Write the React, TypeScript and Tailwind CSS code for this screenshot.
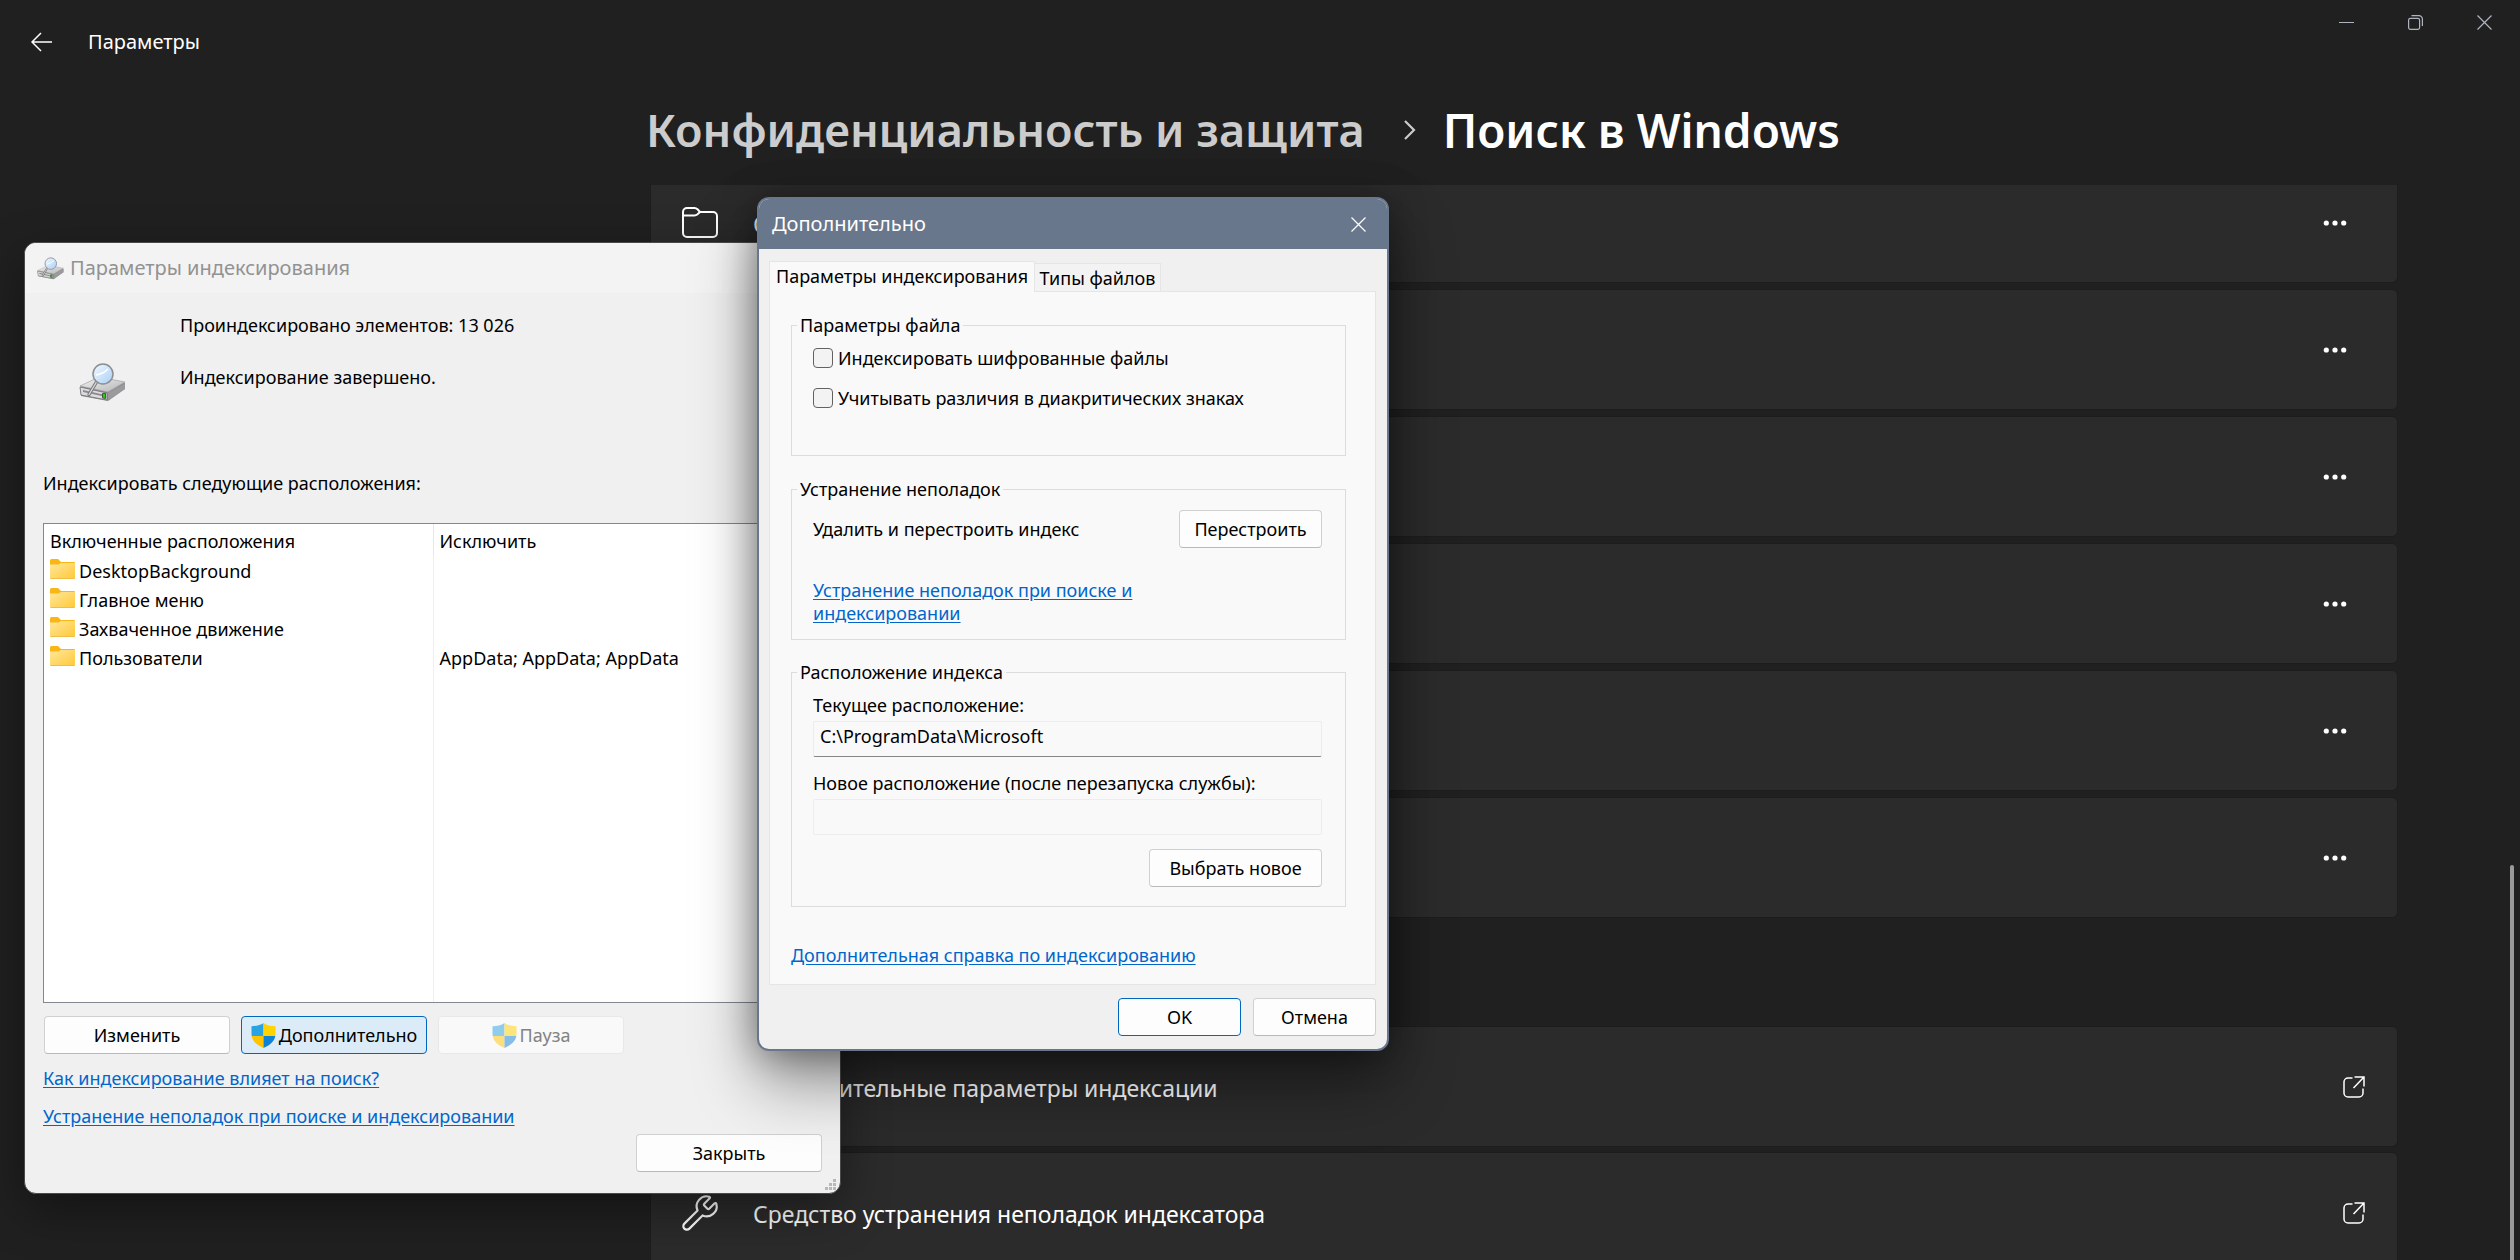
import React from "react";
import { Wrench } from "lucide-react";

const locations = [
  { name: "DesktopBackground", exclude: "" },
  { name: "Главное меню", exclude: "" },
  { name: "Захваченное движение", exclude: "" },
  { name: "Пользователи", exclude: "AppData; AppData; AppData" },
];

const folderRows = ["C", "", "", "", "", ""];

const button =
  "flex h-[38px] items-center justify-center rounded-[4px] border border-[#d0d0d0] border-b-[#b9b9b9] bg-[#fdfdfd]";
const link = "text-[#0066cc] underline underline-offset-2";

function BackArrow() {
  return (
    <svg width="22" height="20" viewBox="0 0 22 20" fill="none" stroke="currentColor" strokeWidth="1.5">
      <path d="M21 10H1.5M10 1 1 10l9 9" />
    </svg>
  );
}

function CloseIcon() {
  return (
    <svg width="15" height="15" viewBox="0 0 15 15" fill="none" stroke="currentColor" strokeWidth="1.2">
      <path d="M.5.5l14 14M14.5.5l-14 14" />
    </svg>
  );
}

function FolderOutline() {
  return (
    <svg width="36" height="31" viewBox="0 0 36 31" fill="none" stroke="currentColor" strokeWidth="2">
      <path d="M1 7V5a4 4 0 0 1 4-4h7.500c1.200 0 2.200.5 3 1.300L18 5h13a4 4 0 0 1 4 4v17a4 4 0 0 1-4 4H5a4 4 0 0 1-4-4Z" />
      <path d="M1 8.500h11.500c1.200 0 2.200-.5 3-1.200L18 5" />
    </svg>
  );
}

function OpenExternal() {
  return (
    <svg width="22" height="22" viewBox="0 0 22 22" fill="none" stroke="currentColor" strokeWidth="1.500">
      <path d="M9.500 2H5a4 4 0 0 0-4 4v11a4 4 0 0 0 4 4h11a4 4 0 0 0 4-4v-4.500" />
      <path d="M11.500 1H21v9.500M21 1 10.500 12" />
    </svg>
  );
}

function Dots() {
  return (
    <svg width="24" height="6" viewBox="0 0 24 6" fill="currentColor">
      <circle cx="3.300" cy="3" r="2.600" />
      <circle cx="12" cy="3" r="2.600" />
      <circle cx="20.700" cy="3" r="2.600" />
    </svg>
  );
}

function YellowFolder() {
  return (
    <svg width="25" height="24" viewBox="0 0 25 24" className="shrink-0">
      <defs>
        <linearGradient id="folder" x1="0" y1="0" x2="1" y2="1">
          <stop offset="0" stopColor="#ffe79c" />
          <stop offset="1" stopColor="#ffc937" />
        </linearGradient>
      </defs>
      <path d="M0 1.500Q0 0 1.500 0H8l3 3h13q1 0 1 1v6H0z" fill="#f9b715" />
      <path d="M0 5.500h8.500L11 4h14v14.500q0 1.500-1.500 1.500h-22Q0 20 0 18.500z" fill="url(#folder)" />
      <path d="M.5 19.500h24" stroke="#f0bd4a" />
    </svg>
  );
}

// Drive with a magnifier standing on it
function IndexIcon({ className }: { className: string }) {
  return (
    <svg viewBox="0 0 47 39" className={className}>
      <defs>
        <linearGradient id="drive" x1="0" y1="0" x2="1" y2="1">
          <stop offset="0" stopColor="#f4f4f4" />
          <stop offset="1" stopColor="#b4b4b6" />
        </linearGradient>
        <linearGradient id="lens" x1="0" y1="0" x2="1" y2="1">
          <stop offset="0" stopColor="#f3f9ff" />
          <stop offset="1" stopColor="#a9cff5" />
        </linearGradient>
      </defs>
      <path d="M1 24 20 15l26 5v6L29 38 2 33z" fill="#8c8c8e" />
      <path d="M1 23 20 14l26 5-17 10z" fill="url(#drive)" stroke="#a2a2a4" strokeWidth=".7" />
      <path d="M1 24 28 30v7L2 32z" fill="#dcdcde" stroke="#707073" strokeWidth=".8" />
      <path d="M29 30 46 20.500V26L29 37z" fill="#9b9b9e" />
      <path d="M4 27l20 4.500v1.800L4 29z" fill="#8a8a8d" />
      <path d="M23.500 30.500h3v5l-3-.5z" fill="#35c41b" stroke="#1e3a18" strokeWidth=".7" />
      <path d="M17.500 19 10 31.500" stroke="#77777a" strokeWidth="3.400" strokeLinecap="round" />
      <path d="M17.500 19 10 31.500" stroke="#d8d8da" strokeWidth="1.400" strokeLinecap="round" />
      <circle cx="24" cy="11" r="10" fill="url(#lens)" stroke="#8b8e93" strokeWidth="1.500" />
      <path d="M17 12q7-1 12-6" fill="none" stroke="#fff" strokeWidth="1.500" />
    </svg>
  );
}

function Shield() {
  return (
    <svg width="25" height="25" viewBox="0 0 25 25">
      <clipPath id="shield">
        <path d="M12.500 0c3 2.200 7.500 3.200 12 3.200V11c0 6.500-5 11-12 14C5.500 22 .5 17.500.5 11V3.200C5 3.200 9.500 2.200 12.500 0z" />
      </clipPath>
      <g clipPath="url(#shield)">
        <path d="M0 0h12.500v13H0z" fill="#2aa3e3" />
        <path d="M12.500 0H25v13H12.500z" fill="#ffd400" />
        <path d="M0 13h12.500v12H0z" fill="#ffc400" />
        <path d="M12.500 13H25v12H12.500z" fill="#0f82d8" />
      </g>
    </svg>
  );
}

function Card({ icon, text, children }: { icon?: React.ReactNode; text: string; children: React.ReactNode }) {
  return (
    <li className="flex h-[121px] shrink-0 items-center rounded-md border border-[#1d1d1d] bg-[#2b2b2b] pr-8 pl-[31px]">
      <span className="mr-[35px] w-9">{icon}</span>
      <span className="flex-1 pt-0.5 text-[23px]">{text}</span>
      {children}
    </li>
  );
}

function SettingsPage() {
  return (
    <main className="flex h-screen flex-col overflow-hidden bg-[#202020] text-white">
      <header className="flex h-[84px] shrink-0 justify-between">
        <div className="flex items-center pl-[31px]">
          <button aria-label="Назад" className="mr-[35px]">
            <BackArrow />
          </button>
          <span className="text-[20px]">Параметры</span>
        </div>
        <div className="flex h-11 pr-px text-[#aeb4c0]">
          <button aria-label="Свернуть" className="flex w-[69px] items-center justify-center">
            <span className="h-px w-[15px] bg-current" />
          </button>
          <button aria-label="Восстановить" className="flex w-[69px] items-center justify-center">
            <svg width="15" height="15" viewBox="0 0 15 15" fill="none" stroke="currentColor" strokeWidth="1.200">
              <rect x=".6" y="3.400" width="11" height="11" rx="1.800" />
              <path d="M3.500.6h7.400a3.500 3.500 0 0 1 3.500 3.500v7" />
            </svg>
          </button>
          <button aria-label="Закрыть окно" className="flex w-[69px] items-center justify-center">
            <CloseIcon />
          </button>
        </div>
      </header>
      <h1 className="mt-4 flex h-[60px] shrink-0 items-center pl-[646px] font-semibold">
        <a href="#privacy" className="text-[45px] text-[#cccccc]">Конфиденциальность и защита</a>
        <svg width="13" height="20" viewBox="0 0 13 20" className="mr-[27px] ml-[38px]" fill="none" stroke="#cccccc" strokeWidth="2.200">
          <path d="m2 1 9 9-9 9" />
        </svg>
        <span className="text-[46px]">Поиск в Windows</span>
      </h1>
      <div className="mt-[25px] flex min-h-0 flex-1 overflow-hidden">
        <div className="-mt-[23px] flex flex-1 flex-col pl-[650px]">
          <ul className="flex flex-col gap-[6px]">
            {folderRows.map((text, i) => (
              <Card key={i} icon={<FolderOutline />} text={text}>
                <button aria-label="Дополнительные действия" className="flex h-12 w-[60px] items-center justify-center">
                  <Dots />
                </button>
              </Card>
            ))}
          </ul>
          <ul className="mt-[108px] flex flex-col gap-[5px]">
            <Card text="Дополнительные параметры индексации">
              <a href="#advanced" aria-label="Открыть"><OpenExternal /></a>
            </Card>
            <Card icon={<Wrench size={40} strokeWidth={1.3} className="-ml-0.5" />} text="Средство устранения неполадок индексатора">
              <a href="#troubleshoot" aria-label="Открыть"><OpenExternal /></a>
            </Card>
          </ul>
        </div>
        <div className="flex w-[122px] flex-col items-end justify-end pr-[6px]">
          <div className="h-[395px] w-1 rounded-t-full bg-[#9a9a9a]" />
        </div>
      </div>
    </main>
  );
}

function IndexingWindow() {
  return (
    <section className="absolute top-[242px] left-[24px] w-[817px] overflow-hidden rounded-xl border border-[#4a4a4a] bg-[#f0f0f0] shadow-[0_16px_48px_rgba(0,0,0,0.4)]">
      <header className="flex h-[50px] items-center bg-[#f3f3f3] pl-3 text-[20px] text-[#929292]">
        <IndexIcon className="mr-[6px] h-[23px] w-[27px]" />
        <h2>Параметры индексирования</h2>
      </header>
      <div className="px-[18px] pb-[21px]">
        <div className="flex pt-5 pl-9">
          <IndexIcon className="mt-[50px] mr-[54px] h-[39px] w-[47px]" />
          <div className="flex flex-col gap-7">
            <p>Проиндексировано элементов: 13 026</p>
            <p>Индексирование завершено.</p>
          </div>
        </div>
        <p className="mt-[69px]">Индексировать следующие расположения:</p>
        <div className="mt-7 h-[480px] border border-[#828790] bg-white">
          <table className="h-full w-full table-fixed text-left">
            <thead>
              <tr className="h-8">
                <th className="w-[389px] border-r border-[#e2e9f0] pt-px pl-[6px] font-normal">Включенные расположения</th>
                <th className="pt-px pl-[6px] font-normal">Исключить</th>
              </tr>
            </thead>
            <tbody>
              {locations.map((row) => (
                <tr key={row.name} className="h-[29px]">
                  <td className="border-r border-[#e8f1f9] pl-[6px]">
                    <span className="flex items-center gap-1">
                      <YellowFolder />
                      {row.name}
                    </span>
                  </td>
                  <td className="pl-[6px]">{row.exclude}</td>
                </tr>
              ))}
              <tr>
                <td className="border-r border-[#e8f1f9]" />
                <td />
              </tr>
            </tbody>
          </table>
        </div>
        <div className="mt-[13px] flex gap-[11px] pl-px">
          <button className={`${button} w-[186px]`}>Изменить</button>
          <button className="flex h-[38px] w-[186px] items-center justify-center gap-[3px] rounded-[4px] border border-[#0067c0] bg-[#dcebf8]">
            <Shield />
            Дополнительно
          </button>
          <button disabled className="flex h-[38px] w-[186px] items-center justify-center gap-[3px] rounded-[4px] border border-[#e8e8e8] bg-[#f9f9f9]">
            <span className="opacity-50"><Shield /></span>
            <span className="text-[#838383]">Пауза</span>
          </button>
        </div>
        <div className="mt-3 flex flex-col items-start gap-[14px]">
          <a href="#how" className={link}>Как индексирование влияет на поиск?</a>
          <a href="#fix" className={link}>Устранение неполадок при поиске и индексировании</a>
        </div>
        <div className="mt-[6px] flex justify-end">
          <button className={`${button} w-[186px]`}>Закрыть</button>
        </div>
      </div>
      <svg width="12" height="12" viewBox="0 0 12 12" className="absolute right-1 bottom-0.5" fill="#b8b8b8">
        <path d="M9 0h3v3H9zM5 4h3v3H5zM9 4h3v3H9zM1 8h3v3H1zM5 8h3v3H5zM9 8h3v3H9z" />
      </svg>
    </section>
  );
}

function Group({ title, className, children }: { title: string; className: string; children: React.ReactNode }) {
  return (
    <fieldset className={`border border-[#dcdcdc] px-[5px] ${className}`}>
      <legend className="px-[3px]">{title}</legend>
      <div className="pr-[18px] pl-4">{children}</div>
    </fieldset>
  );
}

function AdvancedDialog() {
  return (
    <section
      role="dialog"
      aria-labelledby="advanced-title"
      className="absolute top-[197px] left-[757px] w-[632px] overflow-hidden rounded-xl border-2 border-[#68778b] bg-[#f0f0f0] shadow-[0_32px_64px_rgba(0,0,0,0.4),0_2px_36px_rgba(0,0,0,0.36)]"
    >
      <header className="flex h-[50px] items-center justify-between bg-[#68778b] pr-[21px] pl-[13px] text-[20px] text-white">
        <h2 id="advanced-title">Дополнительно</h2>
        <button aria-label="Закрыть">
          <CloseIcon />
        </button>
      </header>
      <div className="pt-3 pr-[11px] pb-[13px] pl-[10px]">
        <div role="tablist" className="flex items-end">
          <button role="tab" aria-selected="true" className="relative z-10 -mb-px h-[31px] w-[266px] border border-b-0 border-[#e5e5e5] bg-[#f9f9f9] pb-0.5">
            Параметры индексирования
          </button>
          <button role="tab" aria-selected="false" className="h-7 w-[126px] border border-b-0 border-l-0 border-[#e5e5e5] bg-[#f3f3f3]">
            Типы файлов
          </button>
        </div>
        <div role="tabpanel" className="border border-[#e5e5e5] bg-[#f9f9f9] pr-[29px] pb-[17px] pl-[21px]">
          <Group title="Параметры файла" className="mt-[21px] pt-[11px] pb-[47px]">
            <label className="flex h-5 items-center gap-[5px]">
              <input type="checkbox" className="size-5 appearance-none rounded-[4px] border border-[#626262] bg-[#f3f3f3]" />
              Индексировать шифрованные файлы
            </label>
            <label className="mt-5 flex h-5 items-center gap-[5px]">
              <input type="checkbox" className="size-5 appearance-none rounded-[4px] border border-[#626262] bg-[#f3f3f3]" />
              Учитывать различия в диакритических знаках
            </label>
          </Group>
          <Group title="Устранение неполадок" className="mt-[21px] pt-[9px] pb-[14px]">
            <div className="flex items-center justify-between">
              <span>Удалить и перестроить индекс</span>
              <button className={`${button} w-[143px]`}>Перестроить</button>
            </div>
            <p className="mt-[31px] w-[350px] leading-[23px]">
              <a href="#fix" className={link}>Устранение неполадок при поиске и индексировании</a>
            </p>
          </Group>
          <Group title="Расположение индекса" className="mt-5 pt-[9px] pb-[19px]">
            <label htmlFor="current" className="block">Текущее расположение:</label>
            <input
              id="current"
              readOnly
              defaultValue="C:\ProgramData\Microsoft"
              className="mt-1 h-9 w-full rounded-[2px] border border-[#ececec] border-b-[#868686] bg-[#f9f9f9] px-[6px] pb-[6px]"
            />
            <label htmlFor="next" className="mt-[14px] block">Новое расположение (после перезапуска службы):</label>
            <input id="next" disabled className="mt-1 block h-9 w-full rounded-[2px] border border-[#ededed] bg-[#f9f9f9] px-[6px]" />
            <div className="mt-[14px] flex justify-end">
              <button className={`${button} w-[173px]`}>Выбрать новое</button>
            </div>
          </Group>
          <p className="mt-9">
            <a href="#help" className={link}>Дополнительная справка по индексированию</a>
          </p>
        </div>
        <div className="mt-[13px] flex justify-end gap-3">
          <button className="flex h-[38px] w-[123px] items-center justify-center rounded-[4px] border border-[#0067c0] bg-[#fdfdfd]">OK</button>
          <button className={`${button} w-[123px]`}>Отмена</button>
        </div>
      </div>
    </section>
  );
}

export default function App() {
  return (
    <div className="relative min-h-screen overflow-hidden font-['Noto_Sans','Open_Sans',sans-serif] text-[18px] leading-6 text-black">
      <SettingsPage />
      <IndexingWindow />
      <AdvancedDialog />
    </div>
  );
}
